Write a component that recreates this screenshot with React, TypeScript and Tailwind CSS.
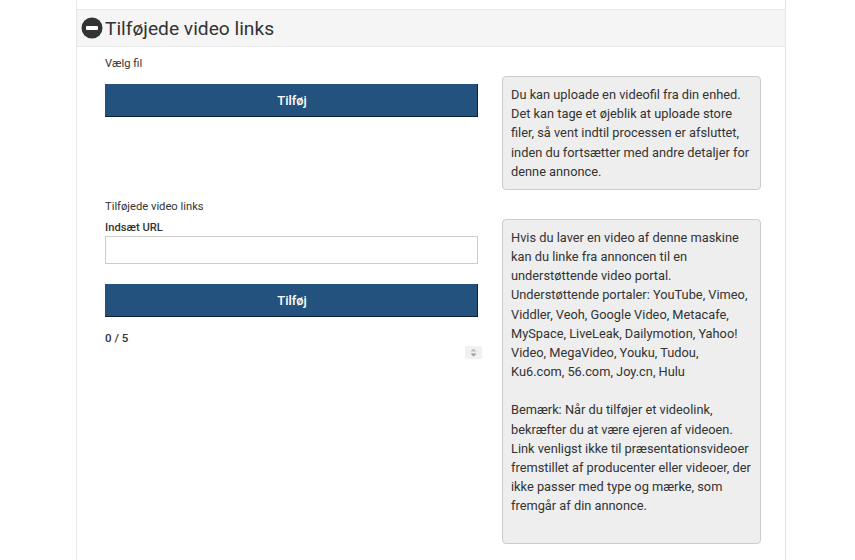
export default function App() {
  return (
    <div className="w-[855px] h-[560px] overflow-hidden bg-white font-['Roboto',sans-serif] text-[#333]">
      <div className="ml-[76px] w-[710px] h-[560px] border-x border-[#e7e7e7] pt-[9px]">
        {/* section header */}
        <div className="h-[38px] flex items-center pl-[4px] bg-[#f5f5f5] border-y border-[#e7e7e7]">
          <svg width="22" height="22" viewBox="0 0 22 22" className="shrink-0">
            <circle cx="11" cy="11" r="10.5" fill="#333" />
            <rect x="5" y="9" width="12" height="4" rx="1" fill="#fff" />
          </svg>
          <h2 className="ml-[2px] mt-[2px] text-[19.2px] leading-none text-[#333]">Tilføjede video links</h2>
        </div>

        <div className="flex pl-[28px] pt-[10px]">
          {/* left column */}
          <div className="w-[373px] text-[11.2px]">
            <p className="leading-[13px]">Vælg fil</p>
            <button className="mt-[14px] w-full h-[33px] pl-[2px] pt-[2px] bg-[#23527f] border-b border-r border-[#0c2238] text-white text-[12.8px] font-medium">
              Tilføj
            </button>
            <p className="mt-[83px] leading-[13px]">Tilføjede video links</p>
            <label className="block mt-[8px] leading-[13px] font-medium">Indsæt URL</label>
            <input className="block mt-[2px] w-full h-[28px] border border-[#ccc] bg-white" />
            <button className="mt-[20px] w-full h-[33px] pl-[2px] pt-[2px] bg-[#23527f] border-b border-r border-[#0c2238] text-white text-[12.8px] font-medium">
              Tilføj
            </button>
            <p className="mt-[15px] leading-[13px] text-[11.5px] font-medium">0 / 5</p>
            <div className="mt-[1px] -mr-[4px] flex justify-end">
              <div className="w-[17px] h-[13px] bg-[#f1f1f1] flex items-center justify-center">
                <svg width="9" height="9" viewBox="0 0 9 9">
                  <path d="M4.5 0.5L7.5 3.5H1.5Z" fill="#bbb" />
                  <path d="M1.5 5.5H7.5L4.5 8.5Z" fill="#999" />
                </svg>
              </div>
            </div>
          </div>

          {/* right column */}
          <div className="ml-[24px] w-[259px] pt-[19px] text-[12.8px] text-[#333]">
            <div className="h-[114px] px-[8px] pt-[8px] leading-[19.2px] bg-[#eee] border border-[#ccc] rounded-[4px]">
              Du kan uploade en videofil fra din enhed. Det kan tage et øjeblik at uploade store filer, så vent indtil processen er afsluttet, inden du fortsætter med andre detaljer for denne annonce.
            </div>
            <div className="mt-[29px] h-[325px] px-[8px] pt-[8px] leading-[19.15px] bg-[#eee] border border-[#ccc] rounded-[4px]">
              Hvis du laver en video af denne maskine kan du linke fra annoncen til en understøttende video portal. Understøttende portaler: YouTube, Vimeo, Viddler, Veoh, Google Video, Metacafe, MySpace, LiveLeak, Dailymotion, Yahoo! Video, MegaVideo, Youku, Tudou, Ku6.com, 56.com, Joy.cn, Hulu
              <br />
              <br />
              Bemærk: Når du tilføjer et videolink, bekræfter du at være ejeren af videoen. Link venligst ikke til præsentationsvideoer fremstillet af producenter eller videoer, der ikke passer med type og mærke, som fremgår af din annonce.
            </div>
          </div>
        </div>
      </div>
    </div>
  );
}
